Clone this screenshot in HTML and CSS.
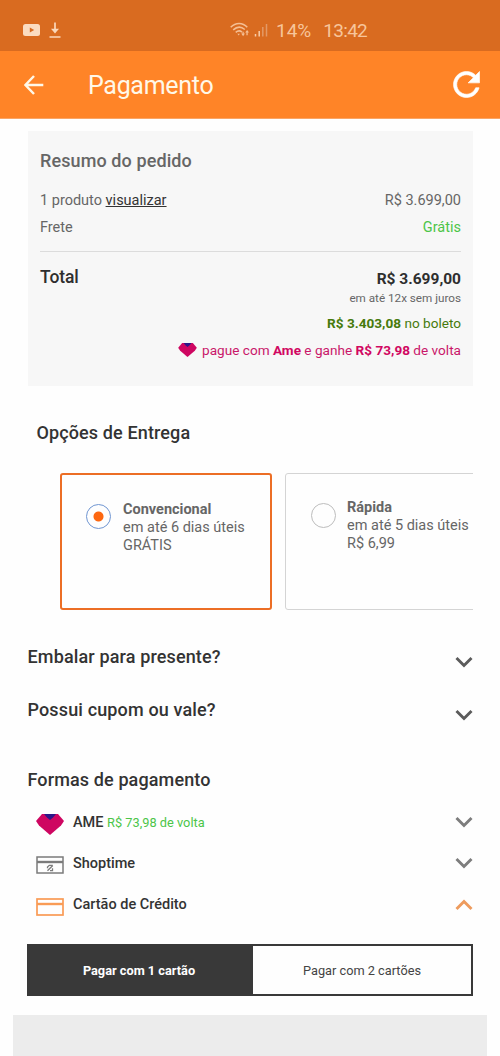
FILE: index.html
```html
<!DOCTYPE html>
<html lang="pt-BR">
<head>
<meta charset="utf-8">
<title>Pagamento</title>
<link rel="stylesheet" href="styles.css">
</head>
<body>
<div class="status">
  <svg class="status-video" viewBox="0 0 17 12" width="17" height="12"><rect width="17" height="12" rx="2.5" fill="#fbdcc0"/><path d="M6.8 3.6v5l4.4-2.5z" fill="#d96b20"/></svg>
  <svg class="status-download" viewBox="0 0 12 16" width="12" height="16"><path d="M6 .5v8M.5 15h11" stroke="#fbd8ba" stroke-width="1.7" fill="none"/><path d="M2 6.7h8l-4 4.8z" fill="#fbd8ba"/></svg>
  <svg class="status-wifi" viewBox="0 0 20 16" width="20" height="16"><g fill="none" stroke="#f5bf94" stroke-width="1.5"><path d="M.7 5.2c5-5 11.800-5 16.600 0"/><path d="M3.200 7.900c3.700-3.400 8.100-3.400 11.600-.4"/><path d="M5.700 10.300c2.200-1.800 4.500-1.800 6.300-.2"/></g><path d="M7.300 11.800l1.500 1.800 1-1.800zM11.200 11.600h1.300V9.800h1.200v1.800H15l-1.900 2.700zM15.200 10.600h1.200v2.600h1.300v-2.600H19L17.100 8z" fill="#f5bf94"/></svg>
  <svg class="status-signal" viewBox="0 0 14 14" width="14" height="14"><path d="M1.500 11v2.500M5.200 8v5.500" stroke="#f8cca8" stroke-width="1.500"/><path d="M8.800 4v9.500M12.500 1v12.500" stroke="#e39966" stroke-width="1.500"/></svg>
  <span class="status-battery">14%</span>
  <span class="status-time">13:42</span>
</div>
<header class="bar">
  <svg viewBox="0 0 20 20" width="20" height="20" fill="none" stroke="#fff8e8" stroke-width="2.500"><path d="M19.300 10H2M10 1L1.400 10l8.600 9"/></svg>
  <h1 class="bar-title">Pagamento</h1>
  <svg class="bar-reload" viewBox="3.700 3.700 16.600 16.600" width="27" height="27"><path d="M17.650 6.350C16.200 4.900 14.210 4 12 4c-4.420 0-7.990 3.580-7.990 8s3.570 8 7.990 8c3.730 0 6.840-2.550 7.730-6h-2.080c-.82 2.330-3.040 4-5.650 4-3.310 0-6-2.690-6-6s2.690-6 6-6c1.660 0 3.140.69 4.220 1.780L13 11h7V4z" fill="#fff" stroke="#fff" stroke-width=".4"/></svg>
</header>
<main class="page">
  <section class="summary">
    <h2 class="summary-title">Resumo do pedido</h2>
    <div class="row products"><span>1 produto <a class="view">visualizar</a></span><span class="price">R$ 3.699,00</span></div>
    <div class="row shipping"><span>Frete</span><span class="free">Grátis</span></div>
    <div class="row total"><span class="total-label">Total</span><span class="total-value">R$ 3.699,00</span></div>
    <div class="installments">em até 12x sem juros</div>
    <div class="boleto"><b>R$ 3.403,08</b> no boleto</div>
    <div class="ame">
      <svg viewBox="0 0 28 21" width="19" height="14"><path d="M6 0h16l6 7-3 4.500L14 21 3 11.500 0 7z" fill="#ce0661"/><path d="M8 0h12l-3 3.500L14 6l-3-2.500z" fill="#2c1788"/></svg>
      <span>pague com <b>Ame</b> e ganhe <b>R$ 73,98</b> de volta</span>
    </div>
  </section>

  <h2 class="delivery-title">Opções de Entrega</h2>
  <div class="options">
    <label class="option selected">
      <span class="radio"></span>
      <span><b>Convencional</b><br>em até 6 dias úteis<br>GRÁTIS</span>
    </label>
    <label class="option">
      <span class="radio"></span>
      <span><b>Rápida</b><br>em até 5 dias úteis<br>R$ 6,99</span>
    </label>
  </div>

  <div class="fold gift"><span>Embalar para presente?</span><svg class="chevron" viewBox="0 0 18 12" width="18" height="12"><path d="M1.500 2L9 9.500 16.500 2"/></svg></div>
  <div class="fold coupon"><span>Possui cupom ou vale?</span><svg class="chevron" viewBox="0 0 18 12" width="18" height="12"><path d="M1.500 2L9 9.500 16.500 2"/></svg></div>

  <h2 class="methods-title">Formas de pagamento</h2>
  <div class="method">
    <svg class="method-icon heart" viewBox="0 0 28 21" width="28" height="21"><path d="M6 0h16l6 7-3 4.500L14 21 3 11.500 0 7z" fill="#ce0661"/><path d="M8 0h12l-3 3.500L14 6l-3-2.500z" fill="#2c1788"/></svg>
    <span class="method-name">AME <span class="cashback">R$ 73,98 de volta</span></span>
    <svg class="chevron light" viewBox="0 0 18 12" width="18" height="12"><path d="M1.500 2L9 9.500 16.500 2"/></svg>
  </div>
  <div class="method">
    <svg class="method-icon" viewBox="0 0 28 18" width="28" height="18" fill="none" stroke="#7b7b7b" stroke-width="1.500"><rect x="1" y="1" width="26" height="16"/><path d="M1 6h26" stroke-width="2.400"/><path d="M11.500 12.300v-1.300l1.800-1.700h3.500M11.500 14.800l5.300-5.300M14 14.700h2.500v-2.500" stroke-width="1.300"/></svg>
    <span class="method-name">Shoptime</span>
    <svg class="chevron light" viewBox="0 0 18 12" width="18" height="12"><path d="M1.500 2L9 9.500 16.500 2"/></svg>
  </div>
  <div class="method">
    <svg class="method-icon" viewBox="0 0 28 18" width="28" height="18" fill="none" stroke="#f99b55" stroke-width="1.700"><rect x="1" y="1" width="26" height="16"/><path d="M1 6h26" stroke-width="2.400"/></svg>
    <span class="method-name">Cartão de Crédito</span>
    <svg class="chevron open" viewBox="0 0 18 12" width="18" height="12"><path d="M1.500 10L9 2.500l7.500 7.500"/></svg>
  </div>

  <div class="tabs">
    <div class="tab active">Pagar com 1 cartão</div>
    <div class="tab">Pagar com 2 cartões</div>
  </div>
</main>
<div class="panel"></div>
</body>
</html>
```

FILE: styles.css
```css
* { box-sizing: border-box; }
body {
  margin: 0;
  height: 1056px;
  overflow: hidden;
  display: flex;
  flex-direction: column;
  background: #fefefe;
  color: #666;
  font-family: Roboto, sans-serif;
  white-space: nowrap;
}
h1, h2 { margin: 0; font-weight: 500; }
svg { flex: none; display: block; }
b { font-weight: 700; }

.status {
  height: 51px;
  flex: none;
  padding: 9px 0 0 23px;
  display: flex;
  align-items: center;
  background: #d96b20;
  color: #f7c59b;
  font-size: 19px;
}
.status-download { margin-left: 9px; }
.status-wifi { margin-left: 169px; }
.status-signal { margin-left: 4px; }
.status-battery { margin-left: 8px; }
.status-time { margin-left: 12px; letter-spacing: -.7px; }

.bar {
  height: 68px;
  flex: none;
  padding: 0 20px 0 24px;
  display: flex;
  align-items: center;
  background: #ff8427;
  border-bottom: 1px solid #f9a566;
}
.bar-title {
  margin-left: 44px;
  padding-top: 2px;
  color: #fff8e8;
  font-size: 25px;
  letter-spacing: -.3px;
  font-weight: 400;
}
.bar-reload { margin-left: auto; }

.page {
  flex: none;
  margin: 12px 27px 0;
}
.summary {
  height: 255px;
  padding: 18px 12px 0;
  margin-left: 1px;
  background: #f7f7f7;
  font-size: 14.500px;
}
.summary-title { font-size: 18px; line-height: 24px; letter-spacing: .1px; }
.row { display: flex; justify-content: space-between; }
.products { margin-top: 15px; line-height: 26px; }
.view { color: #333; text-decoration: underline; }
.shipping {
  height: 38px;
  line-height: 27px;
  border-bottom: 1px solid #dcdcdc;
}
.free { color: #4cc549; }
.total { padding-top: 12px; line-height: 26px; color: #2e2e2e; }
.total-label { font-size: 17.500px; font-weight: 500; letter-spacing: -.1px; }
.total-value { padding-top: 2px; font-size: 15.500px; font-weight: 700; }
.installments { font-size: 11.700px; line-height: 12px; text-align: right; }
.boleto { margin-top: 9px; font-size: 13.600px; line-height: 21px; color: #467a0b; text-align: right; }
.ame {
  margin-top: 6px;
  display: flex;
  justify-content: flex-end;
  align-items: center;
  gap: 5px;
  font-size: 13.600px;
  line-height: 20px;
  color: #c9176a;
}
.ame b { color: #d10761; }

.delivery-title {
  margin: 35px 0 0 9.500px;
  font-size: 18px;
  line-height: 24px;
  letter-spacing: .12px;
  color: #333;
}
.options {
  margin: 28px 0 0 33px;
  display: flex;
  gap: 13px;
  overflow: hidden;
}
.option {
  width: 212px;
  height: 137px;
  flex: none;
  padding: 25px 0 0 25px;
  display: flex;
  gap: 11px;
  border: 1.500px solid #d4d4d4;
  border-radius: 3px;
  font-size: 14.500px;
  line-height: 18px;
}
.option.selected { padding: 26px 0 0 24px; gap: 12px; border: 2px solid #ec6e25; }
.radio {
  width: 25px;
  height: 25px;
  margin-top: 4px;
  flex: none;
  border: 1.500px solid #bdbdbd;
  border-radius: 50%;
}
.selected .radio {
  margin-top: 3px;
  border-color: #7096d2;
  background: radial-gradient(circle, #fd6811 4.500px, transparent 5.500px);
}

.fold {
  display: flex;
  justify-content: space-between;
  padding-left: .5px;
  font-size: 18px;
  line-height: 24px;
  letter-spacing: .14px;
  font-weight: 500;
  color: #333;
}
.gift { margin-top: 35px; }
.coupon { margin-top: 29px; }
.fold .chevron { margin-top: 11px; }
.chevron { fill: none; stroke: #5b5b5b; stroke-width: 2.900; }
.chevron.light { stroke: #7d7d7d; }
.chevron.open { stroke: #ee9b5d; }
.methods-title {
  margin: 46px 0 10px;
  padding-left: .5px;
  font-size: 18px;
  line-height: 24px;
  letter-spacing: .12px;
  color: #333;
}
.method {
  height: 41.400px;
  display: flex;
  align-items: flex-start;
  padding: 10px 0 0 9px;
}
.method-icon { margin-top: 3px; }
.method-icon.heart { margin-top: 2px; }
.method-name {
  margin-left: 9px;
  padding-top: .5px;
  font-size: 14.500px;
  line-height: 20px;
  font-weight: 500;
  color: #333;
}
.cashback { font-size: 12.800px; font-weight: 400; color: #4cc549; }
.method .chevron { margin: 4px 0 0 auto; }

.tabs {
  height: 52px;
  margin-top: 18px;
  display: flex;
  border: 2px solid #393939;
}
.tab {
  flex: 1;
  display: flex;
  align-items: center;
  justify-content: center;
  font-size: 12.750px;
  color: #444;
}
.tab.active {
  flex: none;
  width: 224px;
  padding-right: 4px;
  background: #393939;
  color: #fff;
  font-weight: 700;
}
.panel { flex: 1; margin: 19px 13px 0; background: #ececec; }
```
